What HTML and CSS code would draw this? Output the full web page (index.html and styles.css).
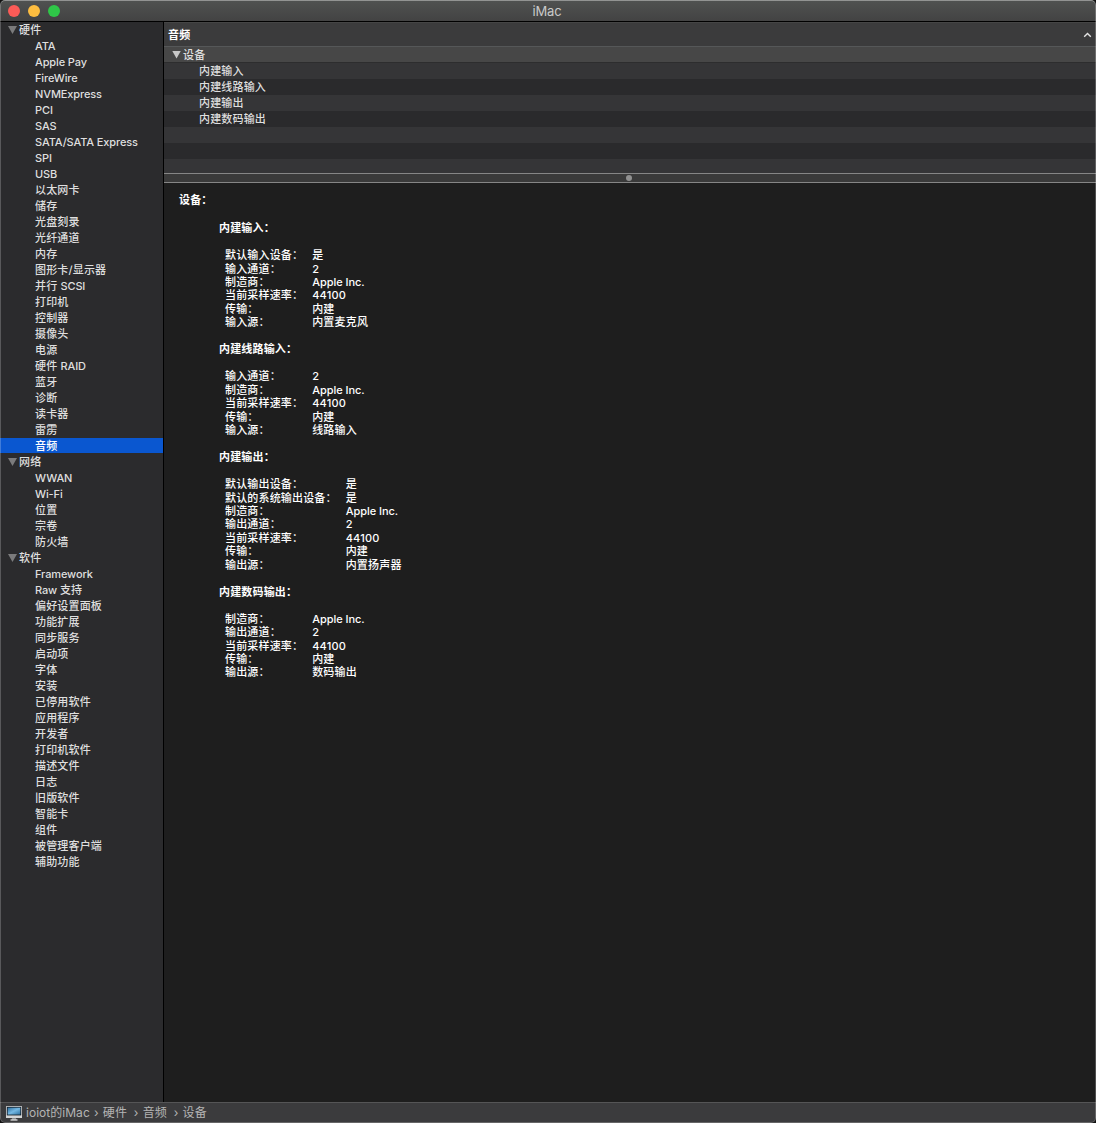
FILE: index.html
```html
<!DOCTYPE html>
<html lang="zh-CN">
<head>
<meta charset="utf-8">
<title>iMac</title>
<link rel="stylesheet" href="styles.css">
</head>
<body>
<div class="window">
  <header class="titlebar">
    <div class="lights"><i class="light close"></i><i class="light minimize"></i><i class="light full"></i></div>
    <div class="title">iMac</div>
  </header>
  <div class="main">
    <nav class="sidebar">
      <div class="group"><i class="tri"></i>硬件</div>
      <div class="item en">ATA</div>
      <div class="item en">Apple Pay</div>
      <div class="item en">FireWire</div>
      <div class="item en">NVMExpress</div>
      <div class="item en">PCI</div>
      <div class="item en">SAS</div>
      <div class="item en">SATA/SATA Express</div>
      <div class="item en">SPI</div>
      <div class="item en">USB</div>
      <div class="item">以太网卡</div>
      <div class="item">储存</div>
      <div class="item">光盘刻录</div>
      <div class="item">光纤通道</div>
      <div class="item">内存</div>
      <div class="item">图形卡/显示器</div>
      <div class="item">并行 <span class="en">SCSI</span></div>
      <div class="item">打印机</div>
      <div class="item">控制器</div>
      <div class="item">摄像头</div>
      <div class="item">电源</div>
      <div class="item">硬件 <span class="en">RAID</span></div>
      <div class="item">蓝牙</div>
      <div class="item">诊断</div>
      <div class="item">读卡器</div>
      <div class="item">雷雳</div>
      <div class="item selected">音频</div>
      <div class="group"><i class="tri"></i>网络</div>
      <div class="item en">WWAN</div>
      <div class="item en">Wi-Fi</div>
      <div class="item">位置</div>
      <div class="item">宗卷</div>
      <div class="item">防火墙</div>
      <div class="group"><i class="tri"></i>软件</div>
      <div class="item en">Framework</div>
      <div class="item"><span class="en">Raw </span>支持</div>
      <div class="item">偏好设置面板</div>
      <div class="item">功能扩展</div>
      <div class="item">同步服务</div>
      <div class="item">启动项</div>
      <div class="item">字体</div>
      <div class="item">安装</div>
      <div class="item">已停用软件</div>
      <div class="item">应用程序</div>
      <div class="item">开发者</div>
      <div class="item">打印机软件</div>
      <div class="item">描述文件</div>
      <div class="item">日志</div>
      <div class="item">旧版软件</div>
      <div class="item">智能卡</div>
      <div class="item">组件</div>
      <div class="item">被管理客户端</div>
      <div class="item">辅助功能</div>
    </nav>
    <section class="content">
      <div class="list-head"><span>音频</span>
        <svg class="caret" width="9" height="6" viewBox="0 0 9 6"><path d="M1.2 4.8 4.5 1.6 7.8 4.8" fill="none" stroke="#e4e4e4" stroke-width="1.4"/></svg>
      </div>
      <div class="list">
        <div class="row active"><i class="tri"></i>设备</div>
        <div class="row">内建输入</div>
        <div class="row">内建线路输入</div>
        <div class="row">内建输出</div>
        <div class="row">内建数码输出</div>
        <div class="row"></div>
        <div class="row"></div>
        <div class="row last"></div>
      </div>
      <div class="splitter"><i class="knob"></i></div>
      <div class="details">
        <h1>设备：</h1>
        <h2>内建输入：</h2>
        <dl>
          <dt>默认输入设备：</dt><dd>是</dd>
          <dt>输入通道：</dt><dd>2</dd>
          <dt>制造商：</dt><dd class="en">Apple Inc.</dd>
          <dt>当前采样速率：</dt><dd>44100</dd>
          <dt>传输：</dt><dd>内建</dd>
          <dt>输入源：</dt><dd>内置麦克风</dd>
        </dl>
        <h2>内建线路输入：</h2>
        <dl>
          <dt>输入通道：</dt><dd>2</dd>
          <dt>制造商：</dt><dd class="en">Apple Inc.</dd>
          <dt>当前采样速率：</dt><dd>44100</dd>
          <dt>传输：</dt><dd>内建</dd>
          <dt>输入源：</dt><dd>线路输入</dd>
        </dl>
        <h2>内建输出：</h2>
        <dl>
          <dt>默认输出设备：</dt><dd>是</dd>
          <dt>默认的系统输出设备：</dt><dd>是</dd>
          <dt>制造商：</dt><dd class="en">Apple Inc.</dd>
          <dt>输出通道：</dt><dd>2</dd>
          <dt>当前采样速率：</dt><dd>44100</dd>
          <dt>传输：</dt><dd>内建</dd>
          <dt>输出源：</dt><dd>内置扬声器</dd>
        </dl>
        <h2>内建数码输出：</h2>
        <dl>
          <dt>制造商：</dt><dd class="en">Apple Inc.</dd>
          <dt>输出通道：</dt><dd>2</dd>
          <dt>当前采样速率：</dt><dd>44100</dd>
          <dt>传输：</dt><dd>内建</dd>
          <dt>输出源：</dt><dd>数码输出</dd>
        </dl>
      </div>
    </section>
  </div>
  <footer class="pathbar">
    <svg class="imac" width="16" height="15" viewBox="0 0 16 15">
      <defs><linearGradient id="screen" x1="0" y1="0" x2="1" y2="1"><stop offset="0" stop-color="#2c6d9d"/><stop offset=".5" stop-color="#75b9e4"/><stop offset="1" stop-color="#2e719f"/></linearGradient></defs>
      <rect x="0" y="0" width="16" height="12" rx=".6" fill="#d3d5d6"/>
      <rect x=".8" y=".8" width="14.4" height="8.6" fill="#101820"/>
      <rect x="1.6" y="1.6" width="12.8" height="7" fill="url(#screen)"/>
      <path d="M6 12h4l.5 2h-5z" fill="#8b8d8e"/>
      <rect x="4.5" y="13.4" width="7" height="1.2" fill="#e5e5e5"/>
    </svg>
    <span class="c1">ioiot的iMac</span><b class="sep">›</b><span class="c2">硬件</span><b class="sep">›</b><span class="c3">音频</span><b class="sep">›</b><span>设备</span>
  </footer>
</div>
</body>
</html>
```
FILE: styles.css
```css
* { box-sizing: border-box; }
html { background: #111; }
body {
  margin: 0;
  font: 500 11px/16px Inter, "Noto Sans CJK SC", sans-serif;
  letter-spacing: 0.17px;
  color: #dfdfdf;
}
.window {
  position: relative;
  width: 1096px;
  height: 1123px;
  display: flex;
  flex-direction: column;
  border-radius: 5px;
  overflow: hidden;
  background: #1e1e1e;
}
/* light rim drawn over the window's edges */
.window::after {
  content: "";
  position: absolute;
  inset: 0;
  border: 1px solid rgba(255, 255, 255, .22);
  border-top-color: rgba(255, 255, 255, .38);
  border-radius: 5px;
  pointer-events: none;
}
.titlebar {
  flex: none;
  height: 22px;
  display: grid;
  grid-template-columns: 1fr auto 1fr;
  align-items: center;
  background: linear-gradient(#505251, #434343);
  border-bottom: 1px solid #000;
}
.lights { display: flex; gap: 8px; padding: 1px 0 0 8px; }
.light { width: 12px; height: 12px; border-radius: 50%; }
.close { background: #fc5b57; }
.minimize { background: #fdbd40; }
.full { background: #2fc748; }
.title { font-size: 13px; font-weight: 400; margin-right: 2px; letter-spacing: -0.1px; color: #c9c9c9; }
.main { flex: 1; min-height: 0; display: flex; }
.sidebar {
  width: 164px;
  flex: none;
  background: #2b2b2d;
  border-right: 1px solid #000;
}
.group, .item { height: 16px; white-space: nowrap; }
.group { display: flex; align-items: center; padding-left: 8px; }
.item { padding-left: 35px; }
.en { letter-spacing: -0.12px; }
.selected { height: 15px; margin-bottom: 1px; background: #0a57d0; color: #fff; }
.tri {
  flex: none;
  width: 9px;
  height: 8px;
  margin-right: 2px;
  background: #7b7b7c;
  clip-path: polygon(0 0, 100% 0, 50% 100%);
}
.content { flex: 1; min-width: 0; display: flex; flex-direction: column; }
.list-head {
  height: 25px;
  flex: none;
  display: flex;
  align-items: center;
  justify-content: space-between;
  padding: 0 4px;
  background: #3b3b3c;
  border-top: 1px solid #454545;
  border-bottom: 1px solid #555758;
  font-weight: 700;
  color: #fff;
}
.list { height: 126px; flex: none; display: flex; flex-direction: column; }
.row { flex: none; height: 16px; padding-left: 35px; background: #2a2a2c; }
.row:nth-child(even) { background: #353537; }
.row.active {
  display: flex;
  align-items: center;
  padding-left: 8px;
  background: #474747;
  border-bottom: 1px solid #2d2d2e;
}
.row.active .tri { background: #c8c8c8; }
.row.last { height: 14px; }
.splitter {
  flex: none;
  height: 10px;
  display: flex;
  align-items: center;
  justify-content: center;
  background: #3a3a3a;
  border: solid #868686;
  border-width: 1px 0;
}
.knob { width: 6px; height: 6px; margin-right: 2px; border-radius: 50%; background: #919191; }
.details { padding: 11.1px 15px 0; color: #fff; line-height: 13.4px; }
.details .en { letter-spacing: -0.04px; }
h1, h2 { font-size: 11px; font-weight: 700; line-height: 13.4px; }
h1 { margin: 0 0 14.6px; }
h2 { margin: 0 0 13.7px 40px; }
dl {
  display: grid;
  grid-template-columns: max-content max-content;
  grid-auto-rows: 13.4px;
  column-gap: 9px;
  margin: 0 0 13.8px 46px;
}
dt, dd { margin: 0; }
.pathbar {
  flex: none;
  height: 21px;
  display: flex;
  align-items: center;
  padding-left: 6px;
  background: #3b3b3d;
  border-top: 1px solid #555556;
  font-size: 12px;
  font-weight: 400;
  letter-spacing: 0.1px;
  color: #b4b4b4;
}
.imac { margin: 0 4px 0 0; }
.sep { width: 13px; text-align: center; font-weight: 400; }
.c1 { letter-spacing: 0.03px; }
.c2, .c3 { margin-right: 2.7px; }
```
